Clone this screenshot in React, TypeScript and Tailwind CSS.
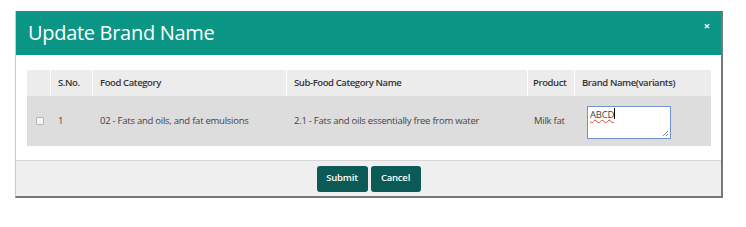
import React from "react";

export default function App() {
  const font = { fontFamily: '"Open Sans", "Noto Sans", sans-serif' };
  return (
    <div className="w-[746px] h-[227px] bg-white pt-[11px] pl-[15px]" style={font}>
      <div className="w-[708px] border-l border-l-[#c8c8c8] border-r-2 border-r-[#777] border-b-2 border-b-[#777] bg-white relative">
        <div className="h-[44px] bg-[#0b9585] flex items-center pl-[12px] relative">
          <span className="text-white text-[20px] leading-none tracking-[-0.3px]">Update Brand Name</span>
          <span className="absolute right-[11px] top-[9px] text-white text-[11px] font-bold leading-none">×</span>
        </div>
        <div className="pt-[15px] pb-[14px] px-[11px]">
          <div className="w-[684px] text-[9.5px] tracking-[-0.25px] text-[#444]">
            <div className="flex h-[26px] bg-[#ececec] items-center font-semibold tracking-[-0.4px] text-[#333]">
              <div className="w-[24px] h-full border-r border-white"></div>
              <div className="w-[42px] h-full border-r border-white flex items-center pl-[7px]">S.No.</div>
              <div className="w-[194px] h-full border-r border-white flex items-center pl-[7px]">Food Category</div>
              <div className="w-[241px] h-full border-r border-white flex items-center pl-[7px]">Sub-Food Category Name</div>
              <div className="w-[47px] h-full border-r border-white flex items-center pl-[5px]">Product</div>
              <div className="flex-1 h-full flex items-center pl-[7px]">Brand Name(variants)</div>
            </div>
            <div className="flex h-[50px] bg-[#dddddd] items-center">
              <div className="w-[24px] flex justify-center pl-[2px]">
                <span className="block w-[8px] h-[8px] border border-[#b5b5b5] bg-[#f5f5f5] rounded-[1px]"></span>
              </div>
              <div className="w-[42px] pl-[7px]">1</div>
              <div className="w-[194px] pl-[7px]">02 - Fats and oils, and fat emulsions</div>
              <div className="w-[241px] pl-[7px]">2.1 - Fats and oils essentially free from water</div>
              <div className="w-[47px] pl-[6px]">Milk fat</div>
              <div className="flex-1 pl-[12px] pt-[2px]">
                <div className="w-[84px] h-[33px] bg-white border border-[#6f93cf] relative px-[2px] py-[1px] leading-[13px]">
                  <span className="underline decoration-wavy decoration-[#e04040] decoration-1">ABCD</span>
                  <span className="inline-block w-px h-[11px] bg-black align-middle -mt-[2px]"></span>
                  <svg className="absolute right-[1px] bottom-[1px]" width="7" height="7" viewBox="0 0 7 7">
                    <path d="M6 1 L1 6 M6 4 L4 6" stroke="#888" strokeWidth="1" />
                  </svg>
                </div>
              </div>
            </div>
          </div>
        </div>
        <div className="h-[36px] border-t border-[#d6d6d6] bg-[#efefef] flex items-center justify-center gap-[3px]">
          <button className="w-[51px] h-[26px] rounded-[3px] bg-[#0b5a55] text-white text-[9.5px] tracking-[-0.2px] font-semibold">Submit</button>
          <button className="w-[50px] h-[26px] rounded-[3px] bg-[#0b5a55] text-white text-[9.5px] tracking-[-0.2px] font-semibold">Cancel</button>
        </div>
      </div>
    </div>
  );
}
